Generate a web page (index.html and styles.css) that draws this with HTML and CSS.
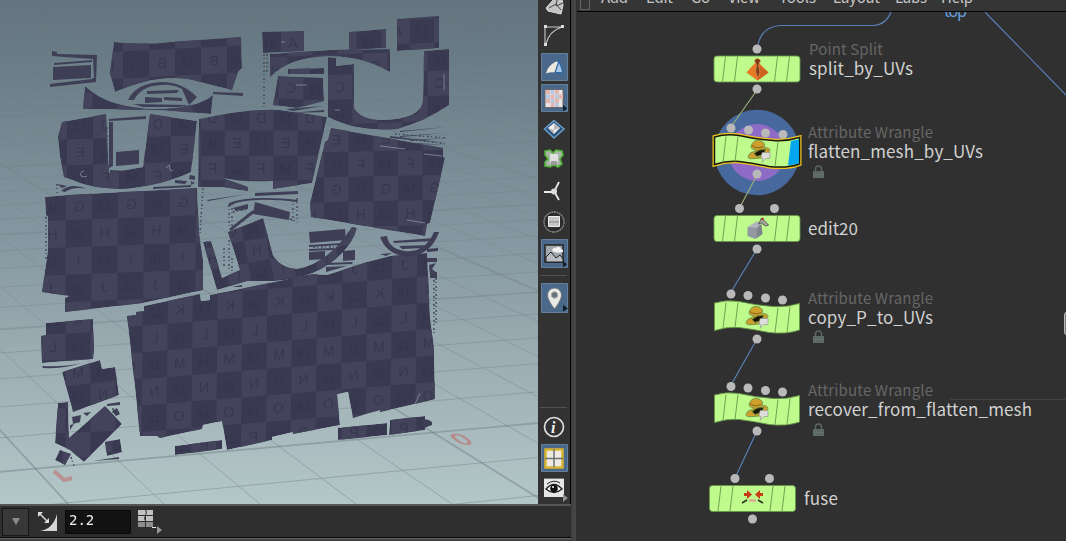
FILE: index.html
```html
<!DOCTYPE html>
<html lang="en">
<head>
<meta charset="utf-8">
<title>UV flatten network</title>
<link rel="stylesheet" href="styles.css">
</head>
<body>
<main class="app">
  <section class="left-pane">
    <div class="view-row">
      <svg class="viewport" width="538" height="504" viewBox="0 0 538 504">
        <defs>
          <linearGradient id="fade" x1="0" y1="0" x2="0" y2="1">
            <stop offset="0" stop-color="#000"/><stop offset=".12" stop-color="#222"/><stop offset=".5" stop-color="#888"/><stop offset="1" stop-color="#fff"/>
          </linearGradient>
          <mask id="fademask" maskUnits="userSpaceOnUse" x="0" y="0" width="538" height="504"><rect width="538" height="504" fill="url(#fade)"/></mask>
        </defs>
        <g id="grid" mask="url(#fademask)" class="grid"></g>
        <text class="axis" transform="matrix(1.1 -.08 .75 .6 460 445)" x="0" y="0">0</text>
        <path class="axis-one" d="M54 471l10 9 8-2"/>
        <g id="islands"></g>
        <g class="scrap">
          <path d="M52 51l5 1v2l40 1-1 27-46 5v-3l42-5 1-20-41-3z"/>
          <path class="gap" d="M56 61l37-2 1 19-41 4-1-20z"/>
          <path d="M54 63l38-3v2l-38 3zM53 67l38-2v13l-38 2z"/>
          <path d="M128 100q8-17 34-18 20 0 35 15l-8 8-7-16q-10-5-21-4-20 1-27 15zM147 91l32-1-2 3-30 1zM145 97l17 1v4l-17 1zM164 97l18 1v3l-18-1zM133 104l56 1-10 2-36 0z"/>
          <path d="M213 92l30 1v3l-30-2zM109 119l37-3v3l-37 2zM109 122l4 0v44l-4 2zM116 152l23-2v14l-23 2zM110 170l18 1-18 2z"/>
          <path d="M57 184l10 2-5 2zM61 191q10-9 26-2-13-3-22 3zM153 187l38-2v2l-38 2zM175 180l12 1-2 3-10-1zM190 175l5 1v4l-6-1zM191 181l4 2-4 2z"/>
          <path d="M200 193l7 7 41-6-40 7zM255 193l43-2v3l-43 2zM229 203q20-8 69-3l-1 2q-38-5-61 1l-8 4zM255 202l35 10-1 8-36-6zM229 229l24-19 1 3-23 18zM233 208l15-4v5l-12 2z"/>
          <path d="M309 232l36-3 1 11-36 3zM309 245l33-2-1 2-32 2zM309 249l25-1v2l-25 1zM309 252l16-1v8l-16 1zM343 251l12-1v10l-12 1zM326 263l27-1-1 2-26 1zM326 267l21-1-21 6z"/>
          <path d="M380 237l7-1q2 13 18 15 20 2 29-19l5 0q-9 26-36 24-17-3-23-19zM393 241l42-3-3 3-38 2zM399 246l29-1-4 3-22 1zM380 254l12-1-6 3zM427 249l11-1v3l-11 1z"/>
          <path d="M392 132l14-3 16-3-31 6zM400 131l47-4-47 5zM400 136l46-3-46 4zM410 140l37-2-37 3zM390 136l57 7-57-5zM415 143l31 2-30-1zM286 109l37-3-30 5zM291 113l33-3v2zM299 117l25-2z"/>
          <path d="M42 366q24 1 39-3-15 6-38 5zM72 417l9-2-1 7-7 2zM83 413l8-1-4 4zM107 404l13-2v3l-13 1zM112 411l5-3 3 6-4 2zM70 425l4-1-4 6zM93 461l26-4v2zM55 463l8 1zM427 258h10v4h-10zM429 265l7-2-4 6 5 4-7 2zM430 272h7v6h-7zM422 420q5-2 10 2v3l-8 3zM232 287l10-2v2z"/>
        </g>
        <g class="specks">
          <path d="M264 54v56M267 54v20M46 217v43M434 280v55M436 278v45M229 205v23M232 208v20M293 200v22M297 198v22M107 127v45M207 241v5M229 240v30M232 258v16M57 184v9M113 408v10M71 457l3 9M224 248v20"/>
          <path d="M203 188l-3 45M233 212l15-3M290 219l8 3M313 247h28M395 134l52 4M400 138l47 6"/>
        </g>
        <g class="glints"><path d="M84 171q-5 1-3 5 3 2 6 0M166 168l3-3 1 5 3 1M380 146l25 3M424 154l18 2M296 85h11M444 74v16M407 220l18 3M335 110h5M415 404l5-11M281 42h4"/></g>
      </svg>
      <aside class="display-bar">
        <svg class="tools" width="33" height="504" viewBox="538 0 33 504">
          <g fill="none" stroke="#c9c9c9">
            <path d="M546 8l8-9 8 0 1 6-2 9-13-3z" fill="#c4c4c4" stroke="#ddd"/><path d="M549 8l7-4 5 6M557 0l-1 6 7-3" stroke="#444"/>
            <path d="M545 27h17M545 27v18M546 44q3-13 16-17" stroke-width="1.1"/><path d="M544 25h3v3h-3zM561 25h3v3h-3zM544 43h3v3h-3z" fill="#ddd" stroke="none"/>
          </g>
          <g class="lit"><path d="M541.500 53.500h26v27h-26zM541.500 84.500h26v27h-26zM541.500 239.500h26v28h-26zM541.500 283.500h26v29h-26zM541.500 444.500h26v27h-26z"/></g>
          <path d="M546 73.500q2-8 10-12l3 1-4 10q-4-1-9 1z" fill="#ece9dc"/><path d="M555 72.500l4-11.500 4 11q-4 1-8 .500z" fill="#a9c7e6" stroke="#2a66a8" stroke-width="1.200"/>
          <g><rect x="545" y="89.500" width="18" height="18" fill="#e9e6e6" stroke="#6b6668"/><path d="M546 90h4v4.500h-4zM555 90h4v4.500h-4zM550.500 94.500h4v4.500h-4zM559 94.500h4v4.500h-4zM546 99h4v4h-4zM555 99h4v4h-4zM550.500 103h4v4h-4z" fill="#e6b5b0"/><path d="M550.500 90h4v4.500h-4zM546 94.500h4v4.500h-4zM555 94.500h4v4.500h-4zM550.500 99h4v4h-4zM555 103h4v4h-4z" fill="#b7cbe0"/></g>
          <path d="M544.500 129l9.500-8.500 10 8.500-10 9z" fill="#28537c" stroke="#6a9cc6" stroke-width="1.500"/><path d="M548 128l6-5 6 5-6 6z" fill="#eee"/><path d="M548 128l6 2v4zM554 123v7l6-2" fill="#b8b8b8"/>
          <path d="M545 151l5-1 3 3 3-3 6 1 1 4-3 4 2 5-4 3-4-2-4 2-5-1v-4l3-3-3-4z" fill="#a9b5a6" stroke="#4faf36" stroke-width="1.600"/><path d="M550 154h8v9h-8z" fill="#dde0dc"/><path d="M551 161h6v4h-6z" fill="#9b9b9b"/>
          <g stroke="#e8e8e8" stroke-width="1.800"><path d="M544 192h10l5-10M555 193l4 7" fill="none"/><circle cx="554" cy="191.500" r="3" fill="#ddd" stroke="none"/></g>
          <circle cx="554" cy="222" r="10" fill="#2b2b2b" stroke="#8e8e8e" stroke-width="1.300" stroke-dasharray="2 .6"/><path d="M548.500 216.500h11v10h-11z" fill="#c5c5c5" stroke="#eee"/><path d="M549 222h10" stroke="#888"/>
          <path d="M545 245h18v17h-18z" fill="#9fa8ad" stroke="#222" stroke-width="1.500"/><path d="M546 262v-5l5-5 5 6 4-3 3 4v3z" fill="#b9bdbf" stroke="#222"/><path d="M552 251q1-4 4-3 3-3 5 1 3 1 2 3-6 2-11-1z" fill="#f1f1f1"/>
          <path d="M554.500 309q-7-9-7-14a7 7 0 0 1 14 0q0 5-7 14z" fill="#e8e8e5" stroke="#767676"/><circle cx="554.500" cy="295" r="3.200" fill="#67747c" stroke="#aaa"/>
          <path class="rule" d="M540 275.500h27M540 407.500h27"/>
          <circle cx="554" cy="427" r="9.500" fill="none" stroke="#ddd" stroke-width="1.700"/><text class="info" x="551" y="433">i</text>
          <path d="M545.500 449.500h17v18h-17z" fill="#eeeae1" stroke="#d9b530" stroke-width="2.500"/><path d="M554 449v18M545 458.500h18" stroke="#69736f" stroke-width="1.500"/>
          <path d="M544 479h20v18h-20z" fill="#e6e6e6"/><path d="M544 478.500h20" stroke="#777"/><path d="M546 489q8-9 16 0-8 7-16 0z" fill="#fff" stroke="#222" stroke-width="1.400"/><circle cx="554" cy="488.500" r="3.800" fill="#111"/><circle cx="553" cy="487" r="1" fill="#fff"/><path d="M547 484q7-5 13-1" fill="none" stroke="#222"/>
          <path d="M563 105l4 3.500-4 3zM563 261l4 3.500-4 3zM563 305l5 3.500-5 3z" fill="#111d29"/><path d="M563 494l5 4-5 4z" fill="#909090"/>
        </svg>
      </aside>
    </div>
    <footer class="status">
      <button class="drop" aria-label="More"><svg width="10" height="10"><path d="M1 1h8l-4 7z" fill="#8d8d8d"/></svg></button>
      <svg class="gamma" width="22" height="24" viewBox="0 0 22 24"><path d="M20 4v17H3q13-2 17-17z" fill="#d6d6d6"/><path d="M3 4l8 8" stroke="#ddd" stroke-width="1.500"/><path d="M1 2h5L1 7zM12 13V8l-5 5z" fill="#ddd"/></svg>
      <input class="value" value="2.2" aria-label="Gamma">
      <svg class="blocks" width="27" height="26" viewBox="0 0 27 26"><path d="M1 0h7l1 2-1 3H1zM9 0h7v5H9l1-3zM1 6h7l-1 2 1 3H1zM9 6h7v5H9z" fill="#c2c2c2"/><path d="M1 12h7v5H1zM9 12h7v5H9z" fill="#8e8e8e"/><path d="M15 17.500h4" stroke="#eee"/><path d="M20 16l5 4-5 4z" fill="#969696"/></svg>
    </footer>
  </section>
  <div class="splitter"></div>
  <section class="network">
    <nav class="menu"><svg width="489" height="11" viewBox="577 0 489 11" class="menu-text">
      <path d="M580.500 0v9.500h9V0" fill="none" stroke="#666"/>
      <text x="601" y="3" textLength="27">Add</text><text x="646" y="3" textLength="27">Edit</text><text x="691" y="3" textLength="19">Go</text><text x="728" y="3" textLength="32">View</text><text x="779" y="3" textLength="37">Tools</text><text x="833" y="3" textLength="47">Layout</text><text x="895" y="3" textLength="32">Labs</text><text x="941" y="3" textLength="32">Help</text>
    </svg></nav>
    <svg class="canvas" width="489" height="529" viewBox="577 12 489 529">
      <defs>
        <g id="stripes"><path d="M12 1l-3 25M24 1l-3 25M64 1l-3 25M76 1l-3 25"/></g>
        <path id="wave" d="M.500 3.500Q12 0 25 2q18 4 34 5 14 1 26.500-3v26.500Q73 35 55 33q-14-3-30-5-12-1-24.500 3z"/>
        <g id="wrangle"><path d="M6 2q4-4 9-1 4 2 2 6 6 0 6 3-4 8-15 8-7 1-7-2 1-4 6-5l2-2q-4 0-5-2 0-3 2-5z" fill="#cf9f2c"/><path d="M7 13q5-5 12-4l-3 5-6 2z" fill="#191507"/><path d="M5 5q5 4 11 1" stroke="#7e5b19" fill="none"/><path d="M15 12h8v6h-4l-4 4 1-4h-2z" fill="#ddd" stroke="#8d9182" stroke-width=".6"/></g>
        <g id="lock"><path d="M3.500 6V4a3 3 0 0 1 6 0v2" fill="none" stroke="#5c6662" stroke-width="1.500"/><path d="M1 6h11v7H1z" fill="#5c6965"/><path d="M1 9.500h11" stroke="#6c7874" stroke-dasharray="1 1"/></g>
      </defs>
      <path d="M950 399.500h116" stroke="#424242"/>
      <circle cx="757" cy="152.500" r="42.700" fill="#47699d"/><circle cx="757" cy="152.500" r="28.500" fill="#8e6bc7"/>
      <g class="wire">
        <path d="M891 12q-5 13-18 13.500h-93Q760 27 757.500 48M985 12l81 83"/>
        <path class="sel" d="M757 90l-26 37M757 175l-17 32"/>
        <path d="M757 249l-26 43M757 339l-26 46M757 431l-22 47"/>
      </g>
      <g class="dots">
        <circle cx="757" cy="49" r="4.500"/><circle cx="757" cy="89" r="4.500"/>
        <circle cx="731" cy="128" r="4.500"/><circle cx="748.500" cy="130" r="4.500"/><circle cx="765.500" cy="133" r="4.500"/><circle cx="783" cy="134.500" r="4.500"/><circle cx="757" cy="174" r="4.500"/>
        <circle cx="739.500" cy="208.500" r="4.500"/><circle cx="774.500" cy="208.500" r="4.500"/><circle cx="757" cy="249" r="4.500"/>
        <circle cx="731" cy="294" r="4.500"/><circle cx="748" cy="295.500" r="4.500"/><circle cx="765.500" cy="298" r="4.500"/><circle cx="782.500" cy="300" r="4.500"/><circle cx="757" cy="339" r="4.500"/>
        <circle cx="731" cy="386.500" r="4.500"/><circle cx="748" cy="388" r="4.500"/><circle cx="765.500" cy="390.500" r="4.500"/><circle cx="782.500" cy="392" r="4.500"/><circle cx="757" cy="431" r="4.500"/>
        <circle cx="735" cy="478.500" r="4.500"/><circle cx="769.500" cy="478.500" r="4.500"/><circle cx="752.500" cy="519" r="4.500"/>
      </g>
      <g class="node" transform="translate(713.500 55.500)"><rect x=".5" y=".5" width="86" height="26" rx="3"/><use href="#stripes"/><path d="M33 17l8-9h5l9 9-11 8z" fill="#e77a25" stroke="none"/><path d="M44 8l11 9-11 8z" fill="#cf6120" stroke="none"/><path d="M41 5q3-4 6 0l-2 5q3 8-1 12-3-6-1-12z" fill="#7e3b19" stroke="#d98a4a" stroke-width=".8"/></g>
      <g class="node wavy" transform="translate(714 133.500)"><use href="#wave" stroke="#f0c51f" stroke-width="4"/><use href="#wave" stroke="#191a0a" stroke-width="1.500"/><path d="M77 7.500l8-1.500v24l-11 2z" fill="#00a6f0" stroke="none"/><path d="M12 3l-3 26M24 3l-3 25M64 8l-3 25"/><use href="#wrangle" x="33" y="7"/></g>
      <g class="node" transform="translate(713.500 215)"><rect x=".5" y=".5" width="86" height="26" rx="3"/><use href="#stripes"/><path d="M34 12l11-3 4 10-7 5-8-3z" fill="#9298a0" stroke="none"/><path d="M34 12l10-6 4 5-4 2z" fill="#b2b6bc" stroke="none"/><path d="M44 12l4-3 1 10-6 4z" fill="#7d848c" stroke="none"/><path d="M45 9l3-6 7 7-3 1-4-3z" fill="#a3a6a2" stroke="#444" stroke-width=".8"/><circle cx="49" cy="4" r="1.300" fill="#a33" stroke="none"/></g>
      <g class="node wavy" transform="translate(714 299.500)"><use href="#wave"/><path d="M12 3l-3 26M24 3l-3 25M64 8l-3 25M76 7l-3 26"/><use href="#wrangle" x="31" y="7"/></g>
      <g class="node wavy" transform="translate(714 391.500)"><use href="#wave"/><path d="M12 3l-3 26M24 3l-3 25M64 8l-3 25M76 7l-3 26"/><use href="#wrangle" x="31" y="7"/></g>
      <g class="node" transform="translate(709 485)"><rect x=".5" y=".5" width="86" height="26" rx="3"/><use href="#stripes"/><path d="M35 8h3V5l5 4.500-5 4.500v-3h-3zM54 8h-3V5l-5 4.500 5 4.500v-3h3z" fill="#c73b16" stroke="none"/><path d="M33 18l5-3M54 18l-5-3" stroke="#25331f" stroke-width="1.500"/><path d="M40 15.500h7" stroke="#df9a92" stroke-width="2"/></g>
      <use href="#lock" x="812" y="165"/><use href="#lock" x="812" y="330"/><use href="#lock" x="812" y="423"/>
      <g class="kind"><text x="809" y="55" textLength="74">Point Split</text><text x="808" y="138" textLength="125">Attribute Wrangle</text><text x="808" y="304" textLength="125">Attribute Wrangle</text><text x="808" y="396" textLength="125">Attribute Wrangle</text></g>
      <g class="name"><text x="809" y="75" textLength="104">split_by_UVs</text><text x="808" y="158" textLength="175">flatten_mesh_by_UVs</text><text x="808" y="235" textLength="50">edit20</text><text x="808" y="324" textLength="125">copy_P_to_UVs</text><text x="808" y="416" textLength="224">recover_from_flatten_mesh</text><text x="804" y="505" textLength="34">fuse</text></g>
      <text class="top-label" x="944" y="17" textLength="23">top</text>
      <rect x="1064.500" y="312" width="6" height="23" rx="3" fill="#777" stroke="#bbb"/>
    </svg>
  </section>
</main>
<script src="scene.js"></script>
</body>
</html>
```

FILE: styles.css
```css
* { box-sizing: border-box; }
body { margin: 0; background: #303030; overflow: hidden; font-family: "Noto Sans CJK SC", "Noto Sans", sans-serif; }
.app { display: flex; width: 1066px; height: 541px; }
.left-pane { display: flex; flex-direction: column; width: 571px; }
.view-row { display: flex; height: 504px; }
.viewport { display: block; background: linear-gradient(#64757f 0, #6a7c86 12%, #788b94 30%, #8799a2 50%, #9aabb1 69%, #b4c7c8 100%); }
.display-bar { width: 33px; background: #323232; border-right: 1px solid #050505; }
.tools { display: block; }
.lit path { fill: #49688a; stroke: #647f9a; }
.rule { stroke: #515151; }
.info { fill: #eee; font: italic bold 16px "Liberation Serif", serif; }
.grid path { fill: none; stroke: #617177; stroke-width: 1; opacity: .38; }
.grid .major { stroke-width: 1.8; opacity: .42; }
.axis { font: 25px "Liberation Sans", sans-serif; fill: #b88988; stroke: #b88988; stroke-width: .7; }
.axis-one { fill: none; stroke: #b69291; stroke-width: 4; }
.cell-dark { fill: #393951; }
.cell-light { fill: #43445b; }
.cell-text { font: 14px "Liberation Sans", sans-serif; text-anchor: middle; fill: #303149; opacity: .6; }
.cell-text.dim { font-size: 12px; opacity: .2; fill: #24253d; }
.scrap { fill: #3e3f56; }
.scrap .gap { fill: #6f828b; }
.specks { fill: none; stroke: #444b5e; stroke-width: 1.5; stroke-dasharray: 2 2 1 3; }
.glints { fill: none; stroke: #8d97a5; stroke-width: 1; opacity: .75; }
.status { display: flex; align-items: center; height: 37px; padding: 0 0 4px 2px; border-top: 2px solid #555; background: linear-gradient(#2e2e2e 31px, #050505 31px, #050505 32px, #666 32px, #666 33px, #414141 33px); }
.drop { width: 27px; height: 28px; padding: 1px 0 0; border: 1px solid #181818; background: #383838; }
.gamma { margin-left: 8px; }
.value { width: 66px; height: 24px; margin-left: 6px; padding: 0 3px 3px; border: 1px solid #090909; background: #121212; color: #ededed; font: 14px "DejaVu Sans Mono", monospace; }
.blocks { margin: 3px 0 0 6px; }
.splitter { width: 6px; background: linear-gradient(90deg, #3d3d3d, #4a4a4a 70%, #292929); }
.network { width: 489px; background: #303030; }
.menu { height: 12px; border-bottom: 1px solid #050505; background: #353535; }
.menu-text { display: block; fill: #c6c6c6; font-size: 15px; }
.canvas { display: block; }
.wire { fill: none; stroke: #587fb5; stroke-width: 1.2; }
.wire .sel { stroke: #96aa79; }
.dots { fill: #b9b9b9; }
.node { fill: #bffb8c; stroke: #68964a; stroke-width: .9; }
.kind { fill: #666; font-size: 15px; }
.name { fill: #d1d1d1; font-size: 17px; }
.top-label { fill: #659fde; font-size: 16px; }
```

FILE: scene.js
```js
const NS = "http://www.w3.org/2000/svg";
function add(parent, tag, attrs, text) {
  const el = document.createElementNS(NS, tag);
  for (const key in attrs) el.setAttribute(key, attrs[key]);
  if (text) el.textContent = text;
  parent.appendChild(el);
  return el;
}

// Ground grid, converging towards the horizon
const grid = document.getElementById("grid");
for (let n = -3; n < 34; n++) {
  const left = -237 + 14085 / (n + 19.87);
  const right = -237 + 13332 / (n + 20.2);
  add(grid, "path", { d: `M0 ${left}L538 ${right}`, class: n % 5 === 0 ? "major" : "" });
}
for (let n = -6; n < 24; n++) {
  add(grid, "path", { d: `M-572 -192L${68 + 96 * n} 504`, class: n % 5 === 0 ? "major" : "" });
}

// Each island: outline, centre of one light cell, column step, row step, letter of that row
const islands = [
  ["M127 316L136 315 136 312 144 311 144 306 200 294 201 301 210 300 210 295 230 291 313 274 327 275 367 262 390 256 427 253 430 317 434 350 435 399 415 404 380 412 380 410 366 414 353 418 348 392 337 394 340 425 293 434 293 432 272 437 272 440 227 450 222 421 203 425 202 429 160 438 157 436 140 436 135 387z", 155, 338, 24.9, -2, -.3, 26.6, "L"],
  ["M45 197L68 195 197 188 199 233 203 260 203 290 143 303 65 312 65 298 69 296 42 292 48 250 48 217 46 215z", 79, 206, 26, -1, -.2, 27.3, "G"],
  ["M199 119L230 113Q260 109 280 110L327 117 312 183 273 189 273 181Q246 183 223 178L248 187 248 191 223 187 198 187z", 237, 143, 24.3, 0, 0, 25, "E"],
  ["M62 122L106 114 109 173 143 167 150 114 197 121 191 172Q179 178 160 183 135 189 120 189 95 188 83 184L64 177 60 157 58 137z", 80, 152, 26, -.8, 0, 26, "E"],
  ["M114 42Q145 45 170 42L241 37 242 68 238 72 232 90Q215 86 200 82 182 76 160 79 140 81 115 92L110 73z", 162, 63, 26, -1.3, 0, 27, "B"],
  ["M331 128L443 148 443 157 445 158 430 223 427 224 425 236 311 217 310 203 325 142 328 140z", 361, 164, 24.6, -.5, 0, 25, "F"],
  ["M328 57L336 58 336 66 354 64 354 108Q361 120 381 120 423 119 423 100L424 51 449 49 449 105Q424 122 397 129 357 132 328 117z", 340, 87, 25, -1, 0, 25, "C"],
  ["M270 54L330 50 390 49 390 72Q366 57 330 56 289 57 270 77z", 325, 68, 25, -1, 0, 26, "B"],
  ["M278 76L323 78 324 101 297 108 273 105z", 291, 88, 25, 1, 0, 22, "C"],
  ["M288 69L324 68 324 74 288 74z", 300, 76, 20, 0, 0, 20, ""],
  ["M262 32L304 31 304 51 263 53z", 293, 43, 24, 0, 0, 23, "A"],
  ["M349 32L386 29 386 48 349 50z", 344, 42, 25, 0, 0, 25, "A"],
  ["M397 19L439 16 439 48 397 51z", 398, 32, 24, -1, 0, 24, "A"],
  ["M85 86Q110 110 163 109 199 107 213 95L211 114 160 110 83 109z", 130, 105, 25, 0, 0, 25, ""],
  ["M228 232L263 218 273 255Q280 268 297 269 329 263 352 227L357 228Q349 256 313 273 293 280 273 281L247 281 217 290 203 242 211 241 222 278 240 270z", 257, 250, 22, -4, 4, 22, "H"],
  ["M46 323L93 319 94 350 93 359 42 363 41 336 46 335z", 53, 347, 25, -1, 0, 26, "L"],
  ["M62 372L100 360 102 369 115 367 119 395 73 412z", 78, 373, 25, -3, 0, 24, "M"],
  ["M58 403L68 402 69 438 105 406 122 424 84 462 70 450 55 443z", 78, 445, 25, -1, 0, 25, ""],
  ["M105 442L120 439 122 452 107 456z M60 450L71 454 65 465 55 460z", 50, 440, 25, 0, 0, 25, ""],
  ["M175 446L222 440 222 449 175 455z M338 428L387 423 387 435 338 440z M390 420L425 416 425 430 389 435z", 204, 444, 25, -2, 0, 25, "P"]
];
const root = document.getElementById("islands");
islands.forEach(([d, x, y, ux, uy, vx, vy, letter], index) => {
  const clip = add(root, "clipPath", { id: "clip" + index });
  const outline = add(clip, "path", { d });
  const box = outline.getBBox();
  const group = add(root, "g", { "clip-path": `url(#clip${index})` });
  add(group, "path", { d, class: "cell-dark" });
  for (let row = -12; row < 13; row++) for (let col = -14; col < 15; col++) {
    const cx = x + col * ux + row * vx, cy = y + col * uy + row * vy;
    if (cx < box.x - 12 || cx > box.x + box.width + 12 || cy < box.y - 13 || cy > box.y + box.height + 13) continue;
    const light = (row + col) % 2 === 0;
    if (light) {
      const ax = cx - (ux + vx) / 2, ay = cy - (uy + vy) / 2;
      add(group, "path", { class: "cell-light", d: `M${ax} ${ay}l${ux} ${uy} ${vx} ${vy} ${-ux} ${-uy}z` });
    }
    if (letter) {
      const mark = String.fromCharCode(letter.charCodeAt(0) + row);
      const label = light ? mark : String(10 + (col + 20) % 9);
      add(group, "text", { class: light ? "cell-text" : "cell-text dim", transform: `matrix(-1 ${-uy / ux} 0 1 ${cx} ${cy + 5})` }, label);
    }
  }
});
```
